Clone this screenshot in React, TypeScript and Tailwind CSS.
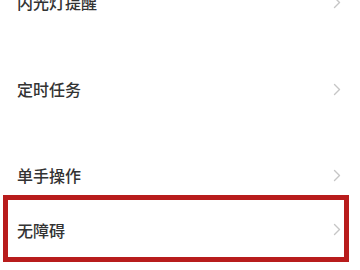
import React from "react";

function Chevron() {
  return (
    <svg width="8" height="13" viewBox="0 0 8 13" fill="none" className="shrink-0">
      <path d="M1.5 1.5 L6.5 6.5 L1.5 11.5" stroke="#c6c6c6" strokeWidth="1.4" strokeLinecap="round" strokeLinejoin="round" />
    </svg>
  );
}

function Row({ label, h, className = "" }: { label: string; h: string; className?: string }) {
  return (
    <div className={`flex items-center justify-between ${h} ${className}`}>
      <span className="text-[16px] leading-none font-medium text-[#333333]">{label}</span>
      <Chevron />
    </div>
  );
}

export default function App() {
  return (
    <div
      className="w-[360px] h-[270px] overflow-hidden bg-white"
      style={{ fontFamily: '"Noto Sans CJK SC", "Noto Sans", sans-serif' }}
    >
      <div className="flex flex-col -mt-[20px]">
        <div className="pl-[17px] pr-[19px]">
          <Row label="内光灯提醒" h="h-[44px]" />
        </div>
        <div className="h-[43px]" />
        <div className="pl-[17px] pr-[19px]">
          <Row label="定时任务" h="h-[44px]" />
        </div>
        <div className="h-[42px]" />
        <div className="pl-[17px] pr-[19px]">
          <Row label="单手操作" h="h-[44px]" />
        </div>
        <div className="ml-[3px] mr-[11px] -mt-[2px] border-[5px] border-[#b81c1c]">
          <div className="pl-[9px] pr-[3px]">
            <Row label="无障碍" h="h-[57px]" className="pt-[2px]" />
          </div>
        </div>
      </div>
    </div>
  );
}
